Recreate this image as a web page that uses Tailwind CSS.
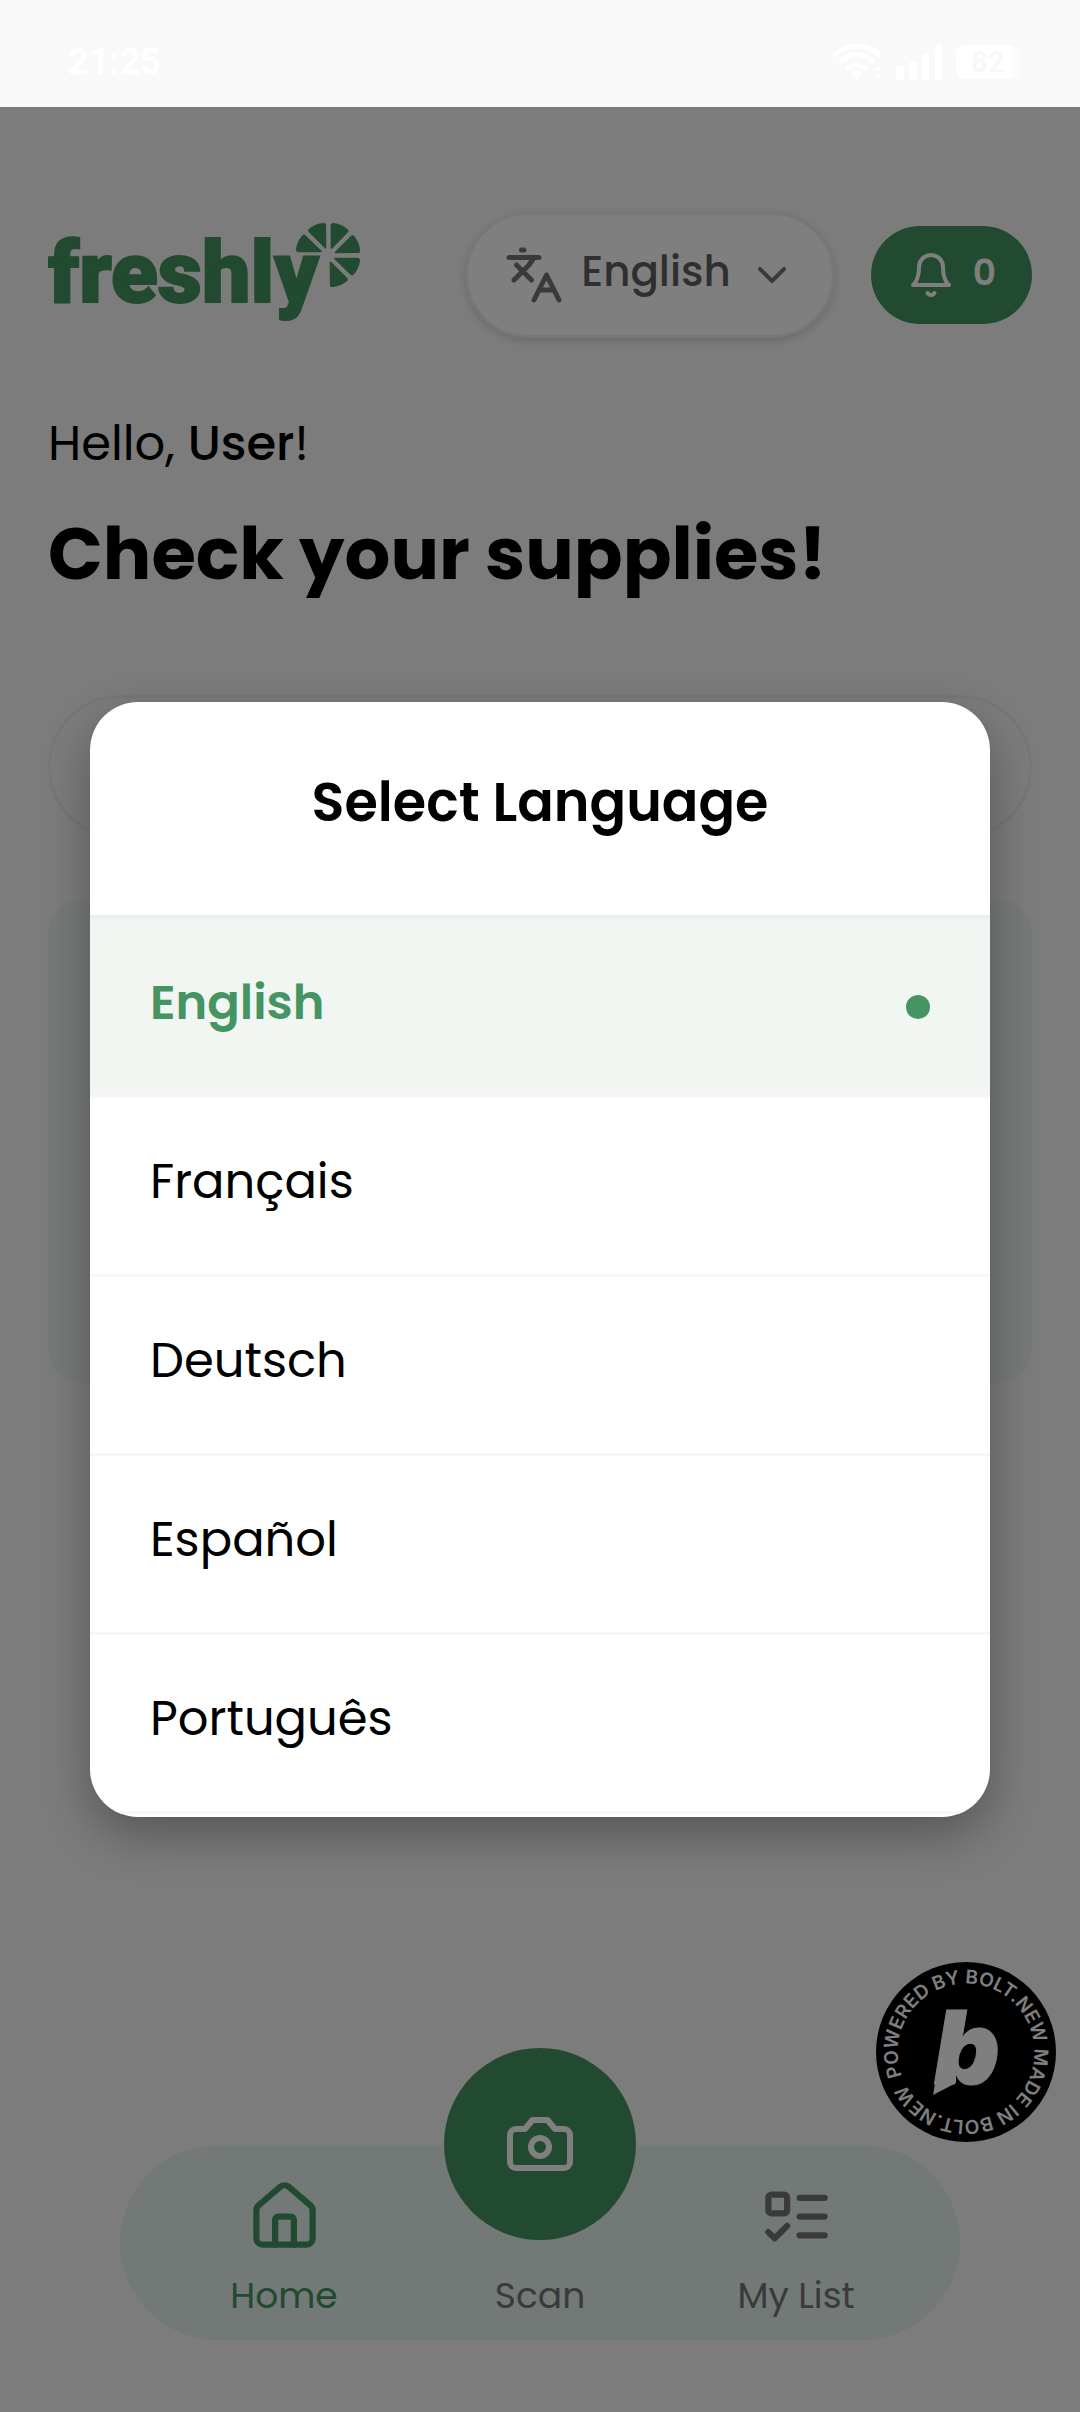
<!DOCTYPE html>
<html lang="en">
<head>
    <meta charset="UTF-8">
    <meta name="viewport" content="width=device-width, initial-scale=1.0">
    <script src="https://cdn.jsdelivr.net/npm/@tailwindcss/browser@4"></script>
    <title>Freshly</title>
</head>
<body class="flex min-h-screen flex-col bg-[#f9f9f9] font-[Poppins,Inter,sans-serif] text-black">
    <!-- Status bar -->
    <div class="flex h-[107px] items-center justify-between pt-4 pr-15 pl-17 text-white">
        <span class="font-[Roboto,sans-serif] text-[36px] font-bold">21:25</span>
        <div class="flex items-center gap-3">
            <svg class="h-9 w-13" viewBox="0 0 52 36" fill="none" stroke="currentColor" stroke-width="5">
                <path d="M2 12a31 31 0 0 1 46 0M8 19a22 22 0 0 1 34 0M14 26a14 14 0 0 1 21 0"/>
                <path d="M25 36l-6-7q6-5 12 0zM46 22l-5 5h10zM46 35l-5-5h10z" fill="currentColor" stroke="none"/>
            </svg>
            <svg class="h-9 w-12" viewBox="0 0 48 36" fill="currentColor">
                <rect x="0" y="22" width="8" height="14" rx="2"/>
                <rect x="13" y="18" width="8" height="18" rx="2"/>
                <rect x="26" y="9" width="7" height="27" rx="2"/>
                <rect x="39" y="0" width="7" height="36" rx="2"/>
            </svg>
            <div class="flex items-center">
                <span class="flex h-[34px] w-14 items-center justify-center rounded-l-lg bg-white pl-2 font-[Roboto,sans-serif] text-[30px] font-medium text-[#f7f7f7]">82</span>
                <span class="h-[34px] w-2 rounded-r-lg bg-white/50"></span>
            </div>
        </div>
    </div>

    <div class="relative flex flex-1 flex-col">
        <!-- Header -->
        <header class="flex items-center px-12 pt-[105px]">
            <svg class="h-[110px] w-[316px]" viewBox="0 0 316 110" fill="#459462" role="img" aria-label="freshly">
                <text x="0" y="82" font-family="Roboto, sans-serif" font-size="86" font-weight="900" stroke="#459462" stroke-width="2">freshly</text>
                <g transform="translate(280 35) scale(.333)">
                    <path id="slice" d="M8-22V-88q0-9 9-8q24 3 41 18q7 6 0 12L12-19q-4 3-4-3z"/>
                    <use href="#slice" transform="rotate(45)"/>
                    <use href="#slice" transform="rotate(90)"/>
                    <use href="#slice" transform="rotate(135)"/>
                    <use href="#slice" transform="rotate(-45)"/>
                    <use href="#slice" transform="rotate(-90)"/>
                </g>
            </svg>
            <button class="ml-auto flex h-[126px] items-center rounded-full border-3 border-[#eee] bg-white px-9 text-[42px] font-medium text-[#5f5f5f] shadow-[0_3px_9px_rgba(0,0,0,0.15)]">
                <svg class="size-[60px] text-[#757575]" viewBox="0 0 24 24" fill="none" stroke="currentColor" stroke-width="2" stroke-linecap="round" stroke-linejoin="round">
                    <path d="m5 8 6 6M4 14l6-6 2-3M2 5h12M7 2h1M22 22l-5-10-5 10M14 18h6"/>
                </svg>
                <span class="mx-[17px] pb-[7px]">English</span>
                <svg class="size-12 text-[#757575]" viewBox="0 0 24 24" fill="none" stroke="currentColor" stroke-width="2" stroke-linecap="round" stroke-linejoin="round">
                    <path d="m6 9 6 6 6-6"/>
                </svg>
            </button>
            <button class="ml-9 flex h-[98px] items-center gap-[18px] rounded-full bg-[#459462] px-9 text-[36px] font-semibold text-white">
                <svg class="size-12" viewBox="0 0 24 24" fill="none" stroke="currentColor" stroke-width="2" stroke-linecap="round" stroke-linejoin="round">
                    <path d="M6 8a6 6 0 0 1 12 0c0 7 3 9 3 9H3s3-2 3-9M10.300 21a1.940 1.940 0 0 0 3.400 0"/>
                </svg>
                <span class="pb-1">0</span>
            </button>
        </header>

        <main class="px-12">
            <p class="mt-[70px] text-[48px] leading-[72px]">Hello, <span class="font-medium">User</span>!</p>
            <h1 class="mt-[26px] text-[72px] leading-[96px] font-bold">Check your supplies!</h1>
            <input type="search" aria-label="Search" class="mt-[93px] block h-36 w-full rounded-full border-3 border-[#eee] bg-[#f9f9f9] px-12 text-[42px]">
            <section class="mt-15 h-[485px] rounded-[36px] bg-[#eaf3ee]"></section>
        </main>

        <!-- Tab bar -->
        <nav class="mx-[120px] mt-auto mb-18 grid grid-cols-3 items-end rounded-full bg-[#e5f2ee] px-9 pt-[34px] pb-5 text-[36px] leading-[48px] text-[#757575]">
            <a href="#" class="flex flex-col items-center gap-[18px] text-[#459462]">
                <svg class="size-[75px]" viewBox="0 0 24 24" fill="none" stroke="currentColor" stroke-width="2" stroke-linecap="round" stroke-linejoin="round">
                    <path d="M15 21v-8a1 1 0 0 0-1-1h-4a1 1 0 0 0-1 1v8"/>
                    <path d="M3 10a2 2 0 0 1 .709-1.528l7-5.999a2 2 0 0 1 2.582 0l7 5.999A2 2 0 0 1 21 10v9a2 2 0 0 1-2 2H5a2 2 0 0 1-2-2z"/>
                </svg>
                Home
            </a>
            <a href="#" class="-mt-[131px] flex flex-col items-center gap-8">
                <span class="flex size-48 items-center justify-center rounded-full bg-[#459462] text-white">
                    <svg class="size-18" viewBox="0 0 24 24" fill="none" stroke="currentColor" stroke-width="2" stroke-linecap="round" stroke-linejoin="round">
                        <path d="M14.500 4h-5L7 7H4a2 2 0 0 0-2 2v9a2 2 0 0 0 2 2h16a2 2 0 0 0 2-2V9a2 2 0 0 0-2-2h-3z"/>
                        <circle cx="12" cy="13" r="3"/>
                    </svg>
                </span>
                Scan
            </a>
            <a href="#" class="flex flex-col items-center gap-[18px]">
                <svg class="size-[75px]" viewBox="0 0 24 24" fill="none" stroke="currentColor" stroke-width="2" stroke-linecap="round" stroke-linejoin="round">
                    <rect x="3" y="5" width="6" height="6" rx="1"/>
                    <path d="m3 17 2 2 4-4M13 6h8M13 12h8M13 18h8"/>
                </svg>
                My List
            </a>
        </nav>

        <!-- Bolt badge -->
        <a href="#" aria-label="Powered by Bolt.new" class="absolute right-6 bottom-[270px]">
            <svg class="size-[180px]" viewBox="-90 -90 180 180" fill="#fff">
                <circle r="90" fill="#000"/>
                <path id="ring" d="M-64 24A68 68 0 0 1 64-24A68 68 0 0 1-64 24" fill="none"/>
                <text font-family="Inter, sans-serif" font-size="19" font-weight="600"><textPath href="#ring">POWERED BY BOLT.NEW MADE IN BOLT.NEW</textPath></text>
                <text x="-32" y="32" font-family="Inter, sans-serif" font-size="102" font-weight="900" font-style="italic" stroke="#fff" stroke-width="1">b</text>
                <path d="M-33 43L-20-30L-8-30L-10 31z"/>
            </svg>
        </a>

        <!-- Language dialog -->
        <div class="absolute inset-0 flex items-center justify-center bg-black/50 px-[90px]">
            <div role="dialog" aria-labelledby="dialog-title" class="w-full overflow-hidden rounded-[48px] bg-white pb-[3px] shadow-[0_18px_48px_rgba(0,0,0,0.3)]">
                <h2 id="dialog-title" class="border-b-4 border-[#eee] pt-16 pb-[77px] text-center text-[54px] leading-[72px] font-semibold">Select Language</h2>
                <button class="flex h-[179px] w-full items-center justify-between border-b-3 border-[#f7f7f7] bg-[#f1f6f2] px-15 text-[48px] font-semibold text-[#459462]">
                    <span class="pb-2">English</span>
                    <span class="size-6 rounded-full bg-[#459462]"></span>
                </button>
                <button class="flex h-[179px] w-full items-center border-b-3 border-[#f7f7f7] px-15 text-[48px]"><span class="pb-2">Français</span></button>
                <button class="flex h-[179px] w-full items-center border-b-3 border-[#f7f7f7] px-15 text-[48px]"><span class="pb-2">Deutsch</span></button>
                <button class="flex h-[179px] w-full items-center border-b-3 border-[#f7f7f7] px-15 text-[48px]"><span class="pb-2">Español</span></button>
                <button class="flex h-[179px] w-full items-center border-b-3 border-[#f7f7f7] px-15 text-[48px]"><span class="pb-2">Português</span></button>
            </div>
        </div>
    </div>
</body>
</html>
